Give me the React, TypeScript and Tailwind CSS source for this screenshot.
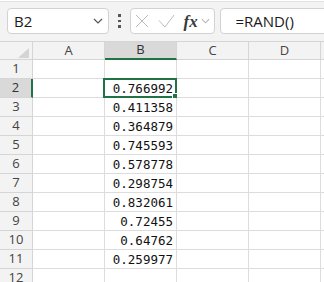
import React from 'react';

const cols = ['A', 'B', 'C', 'D'];
const rows = [1, 2, 3, 4, 5, 6, 7, 8, 9, 10, 11, 12];

const values: Record<number, string> = {
  2: '0.766992',
  3: '0.411358',
  4: '0.364879',
  5: '0.745593',
  6: '0.578778',
  7: '0.298754',
  8: '0.832061',
  9: '0.72455',
  10: '0.64762',
  11: '0.259977',
};

const uiFont = { fontFamily: '"Open Sans", "Noto Sans", sans-serif' };
const cellFont = { fontFamily: '"DejaVu Sans Mono", "Liberation Mono", monospace' };

const Chevron: React.FC<{ color: string; w?: number }> = ({ color, w = 10 }) => (
  <svg width={w} height="6" viewBox="0 0 10 6" fill="none">
    <path d="M1 1l4 4 4-4" stroke={color} strokeWidth="1.2" />
  </svg>
);

const Toolbar: React.FC = () => (
  <div className="h-[41px] flex flex-col bg-[#f3f3f3]">
    <div className="h-px bg-white" />
    <div className="h-px bg-[#e3e3e3]" />
    <div className="mt-[6px] flex items-center h-[26px] pl-[7px]">
      {/* name box */}
      <div className="w-[102px] h-[26px] shrink-0 rounded-[4px] border border-[#d2d2d2] bg-white flex items-center justify-between pl-[6px] pr-[5px]">
        <span className="text-[15px] text-[#1a1a1a] leading-none" style={uiFont}>B2</span>
        <Chevron color="#555" />
      </div>

      {/* dots */}
      <div className="ml-[9px] w-[3px] flex flex-col gap-[3px] items-center">
        <div className="w-[2.5px] h-[2.5px] bg-[#555]" />
        <div className="w-[2.5px] h-[2.5px] bg-[#555]" />
        <div className="w-[2.5px] h-[2.5px] bg-[#555]" />
      </div>

      {/* cancel / enter / fx */}
      <div className="ml-[9px] w-[85px] h-[26px] shrink-0 rounded-[4px] border border-[#d2d2d2] bg-white flex items-center pl-[4px]">
        <svg width="14" height="14" viewBox="0 0 14 14" fill="none">
          <path d="M1 1l12 12M13 1L1 13" stroke="#bdbdbd" strokeWidth="1" />
        </svg>
        <svg className="ml-[9px]" width="17" height="14" viewBox="0 0 17 14" fill="none">
          <path d="M1 6.5l6 6.5L16 1" stroke="#bdbdbd" strokeWidth="1" />
        </svg>
        <span
          className="ml-[9px] text-[17px] leading-none italic font-bold text-[#3a3a3a]"
          style={{ fontFamily: '"Liberation Serif", "DejaVu Serif", serif' }}
        >
          fx
        </span>
        <div className="ml-[3px]">
          <Chevron color="#b5b5b5" w={9} />
        </div>
      </div>

      {/* formula bar */}
      <div className="ml-[5px] w-[140px] h-[26px] shrink-0 rounded-[4px] border border-[#d2d2d2] bg-white flex items-center pl-[15px]">
        <span className="text-[15px] leading-none text-[#1a1a1a]" style={uiFont}>=RAND()</span>
      </div>
    </div>
  </div>
);

const HeaderRow: React.FC = () => (
  <div className="flex border-t border-[#d5d5d5] bg-[#f3f3f3]">
    <div className="w-[33px] h-[18px] shrink-0 border-r border-b border-[#d5d5d5] flex items-end justify-end pr-[3px] pb-[1px]">
      <svg width="11" height="10" viewBox="0 0 11 10">
        <polygon points="11,0 11,10 0,10" fill="#d4d4d4" />
      </svg>
    </div>
    {cols.map((c) => (
      <div
        key={c}
        className={
          c === 'B'
            ? 'w-[72px] h-[18px] shrink-0 border-r border-b-2 border-r-[#d5d5d5] border-b-[#217346] bg-[#d9d9d9] flex items-center justify-center text-[13px] text-[#333]'
            : 'w-[72px] h-[18px] shrink-0 border-r border-b border-[#d5d5d5] flex items-center justify-center text-[13px] text-[#444]'
        }
        style={uiFont}
      >
        {c}
      </div>
    ))}
    <div className="flex-1 h-[18px] border-b border-[#d5d5d5]" />
  </div>
);

const DataRow: React.FC<{ n: number }> = ({ n }) => (
  <div className="flex h-[19px]">
    <div
      className={
        n === 2
          ? 'w-[33px] shrink-0 border-r-2 border-b border-r-[#217346] border-b-[#d5d5d5] bg-[#d9d9d9] flex items-center justify-center text-[13px] text-[#333]'
          : 'w-[33px] shrink-0 border-r border-b border-[#d5d5d5] bg-[#f3f3f3] flex items-center justify-center text-[13px] text-[#444]'
      }
      style={uiFont}
    >
      {n}
    </div>
    {cols.map((c) => (
      <div key={c} className="relative w-[72px] shrink-0 border-r border-b border-[#dcdcdc] flex items-center justify-end pr-[3px]">
        {c === 'B' && values[n] && (
          <span className="text-[12.5px] text-[#111] leading-none pt-[2px]" style={cellFont}>
            {values[n]}
          </span>
        )}
        {c === 'B' && n === 2 && (
          <div className="absolute top-[-1px] bottom-[-1px] left-[-2px] right-[-1px] border-2 border-[#217346]">
            <div className="absolute right-[-3px] bottom-[-3px] w-[6px] h-[6px] bg-[#217346] border border-white" />
          </div>
        )}
      </div>
    ))}
    <div className="flex-1 border-b border-[#dcdcdc]" />
  </div>
);

export default function App() {
  return (
    <div className="w-[324px] h-[282px] overflow-hidden bg-white">
      <Toolbar />
      <HeaderRow />
      {rows.map((n) => (
        <DataRow key={n} n={n} />
      ))}
    </div>
  );
}
